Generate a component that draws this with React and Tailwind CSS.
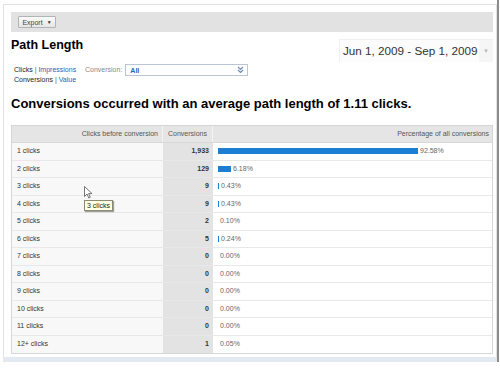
const rows = [
  { label: "1 clicks", conv: "1,933", pct: 92.58 },
  { label: "2 clicks", conv: "129", pct: 6.18 },
  { label: "3 clicks", conv: "9", pct: 0.43 },
  { label: "4 clicks", conv: "9", pct: 0.43 },
  { label: "5 clicks", conv: "2", pct: 0.1 },
  { label: "6 clicks", conv: "5", pct: 0.24 },
  { label: "7 clicks", conv: "0", pct: 0 },
  { label: "8 clicks", conv: "0", pct: 0 },
  { label: "9 clicks", conv: "0", pct: 0 },
  { label: "10 clicks", conv: "0", pct: 0 },
  { label: "11 clicks", conv: "0", pct: 0 },
  { label: "12+ clicks", conv: "1", pct: 0.05 },
];

const barWidth = (pct) => {
  if (pct <= 0.2) return 0;
  if (pct < 1) return 1;
  return Math.round(pct * 2.16);
};

const App = () => {
  return (
    <div className="relative w-[500px] h-[368px] bg-white overflow-hidden flex pl-[3px] font-['Liberation_Sans',Arial,sans-serif] text-[#222]">
      <div className="w-[494px] flex flex-col">
        <div className="mt-[4px] h-[353px] border-t border-l border-r border-[#e2e2e2] pl-[7px] pr-[3px] pt-[7px]">
          {/* toolbar */}
          <div className="h-[20px] bg-[#e2e2e2] flex items-start pl-[7px] pt-[4px]">
            <div className="h-[12px] w-[38px] border border-[#b4b4b4] rounded-[1px] bg-gradient-to-b from-[#fbfbfb] to-[#e6e6e6] flex items-center justify-center gap-[4px] text-[7px] text-[#444] leading-none">
              <span>Export</span>
              <span className="text-[5px] text-[#333]">▼</span>
            </div>
          </div>

          {/* title row */}
          <div className="h-[30px] flex justify-between items-start">
            <div className="mt-[6px] text-[12.5px] font-bold leading-[15px] text-black">Path Length</div>
            <div className="mt-[7px] h-[23px] w-[154px] flex items-center bg-[#fcfcfc] border-l border-t border-[#f0f0f0]">
              <span className="pl-[3px] text-[11.7px] text-[#333] leading-none whitespace-nowrap">
                Jun 1, 2009 - Sep 1, 2009
              </span>
              <div className="ml-auto h-full w-[14px] bg-[#f6f6f6] flex items-center justify-center">
                <span className="text-[6px] text-[#b8b8b8] leading-none">▼</span>
              </div>
            </div>
          </div>

          {/* filters */}
          <div className="mt-[2px] flex items-start text-[7px] leading-[10px]">
            <div className="pl-[3px] pt-[1px] w-[74px]">
              <div>
                <span className="text-[#222]">Clicks</span> <span className="text-[#555]">|</span>{" "}
                <span className="text-[#2a62b8]">Impressions</span>
              </div>
              <div>
                <span className="text-[#222]">Conversions</span> <span className="text-[#555]">|</span>{" "}
                <span className="text-[#2a62b8]">Value</span>
              </div>
            </div>
            <span className="pt-[1px] text-[#8a8a8a]">Conversion:</span>
            <div className="ml-[3px] h-[12px] w-[123px] border border-[#b9c6d6] bg-white flex items-center pl-[4px] pr-[3px]">
              <span className="text-[#2a62b8] font-bold leading-none">All</span>
              <svg className="ml-auto" width="7" height="8" viewBox="0 0 7 8">
                <path d="M1 1 L3.5 3.5 L6 1 M1 4 L3.5 6.5 L6 4" fill="none" stroke="#6f8fb8" strokeWidth="1.2" />
              </svg>
            </div>
          </div>

          {/* headline */}
          <div className="mt-[11px] text-[13px] font-bold leading-[16px] text-black">
            Conversions occurred with an average path length of 1.11 clicks.
          </div>

          {/* table */}
          <div className="mt-[13px] border border-[#d6d6d6] text-[7px]">
            <div className="grid grid-cols-[151px_50px_1fr] h-[17px] bg-[#e5e5e5] text-[#555] border-b border-[#d8d8d8]">
              <div className="flex items-center justify-end pr-[4px] border-r border-[#f4f4f4]">
                Clicks before conversion
              </div>
              <div className="flex items-center justify-center border-r border-[#f4f4f4]">Conversions</div>
              <div className="flex items-center justify-end pr-[3px]">Percentage of all conversions</div>
            </div>
            {rows.map((r) => (
              <div
                key={r.label}
                className="grid grid-cols-[151px_50px_1fr] h-[17.5px] border-b border-[#e8e8e8] last:border-b-0"
              >
                <div className="flex items-center pl-[5px] bg-[#f8f8f8] text-[#333]">{r.label}</div>
                <div className="flex items-center justify-end pr-[4px] bg-[#e3e3e3] font-bold text-[#333]">
                  {r.conv}
                </div>
                <div className="flex items-center pl-[5px] bg-white text-[#666]">
                  <div className="h-[6px] bg-[#1b7fd5]" style={{ width: barWidth(r.pct) }} />
                  <span className="ml-[2px]">{r.pct.toFixed(2)}%</span>
                </div>
              </div>
            ))}
          </div>
        </div>
        <div className="h-[5px] bg-[#e3e9f0]" />
      </div>
      <div className="w-[2px] h-[362px] bg-[#8c8c8c]" />

      {/* cursor + tooltip */}
      <svg className="absolute left-[84px] top-[186px]" width="9" height="13" viewBox="0 0 9 13">
        <path d="M0.5 0.5 L0.5 10.5 L3 8 L4.8 12 L6.3 11.3 L4.6 7.6 L8 7.6 Z" fill="#fff" stroke="#555" strokeWidth="0.8" />
      </svg>
      <div className="absolute left-[84px] top-[200px] h-[11px] px-[2px] bg-[#ffffe6] border border-[#8a8a70] shadow-[1px_1px_1px_rgba(0,0,0,0.35)] text-[7px] leading-[9px] text-[#222]">
        3 clicks
      </div>
    </div>
  );
};

export default App;
